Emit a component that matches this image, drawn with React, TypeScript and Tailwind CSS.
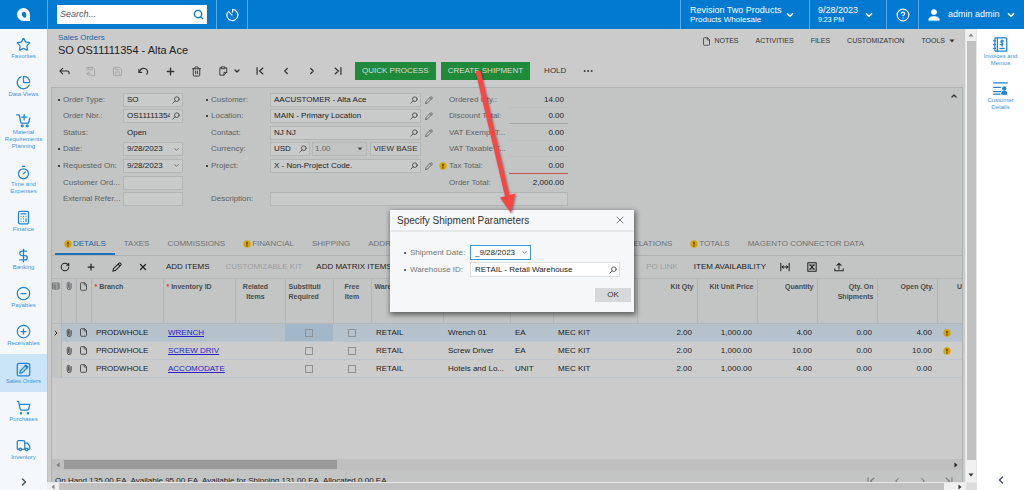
import type { ComponentType, ReactNode } from "react";
import {
  Calculator,
  ChartPie,
  ChevronDown,
  ChevronLeft,
  ChevronRight,
  ChevronUp,
  CircleHelp,
  CircleMinus,
  CirclePlus,
  DollarSign,
  Ellipsis,
  File,
  Paperclip,
  Plus,
  RotateCw,
  Save,
  Search,
  ShoppingCart,
  Star,
  Timer,
  Trash2,
  Truck,
  X,
} from "lucide-react";
import { clsx } from "clsx";

type IconType = ComponentType<{ className?: string; strokeWidth?: number }>;

function svgIcon(children: ReactNode): IconType {
  return function SvgIcon({ className, strokeWidth = 2 }) {
    return (
      <svg
        viewBox="0 0 24 24"
        fill="none"
        stroke="currentColor"
        strokeWidth={strokeWidth}
        strokeLinecap="round"
        strokeLinejoin="round"
        className={className}
        aria-hidden="true"
      >
        {children}
      </svg>
    );
  };
}

const Lookup = svgIcon(
  <>
    <circle cx="14.5" cy="9.5" r="7" />
    <path d="M9.5 14.5 2.5 21.5" />
  </>
);
const Edit = svgIcon(<path d="M2 22l1.500-6L17 2.500c2-1.500 6 2.500 4.500 4.500L8 20.500ZM14.500 5l4.500 4.500" />);
const Back = svgIcon(<path d="M8 5 2 11l6 6M2 11h16c2.500 0 4 1.500 4 5v1" />);
const SaveBack = svgIcon(
  <path d="M4 9V3h14l3 3v15H14M8 3v5h8V3M9 13l-5 4 5 4M4 17h6c2 0 3 1 3 3" />
);
const Undo = svgIcon(<path d="M2 8v6h6M2.500 13.500C5 7 10 4 15 5.500c6 2 8 8 4 12.500" />);
const Copy = svgIcon(<path d="M8 4H4v16h9l6-6V4h-4M8 2h7v4H8ZM13 20v-6h6" />);
const First = svgIcon(<path d="M5 4v16M19 5l-8 7 8 7" />);
const Last = svgIcon(<path d="M19 4v16M5 5l8 7-8 7" />);
const FitColumns = svgIcon(<path d="M2 3v18M22 3v18M5 12h14M8 9l-3 3 3 3M16 9l3 3-3 3" />);
const Excel = svgIcon(
  <>
    <path d="M2 2h20v20H2Z" />
    <path d="m8 7 8 10M16 7 8 17M6 7h4M14 7h4M6 17h4M14 17h4" strokeWidth="2.500" />
  </>
);
const Export = svgIcon(<path d="M12 17V3M7 8l5-5 5 5M2 16v5h20v-5" />);
const RowMenu = svgIcon(<path d="M3 3h18v18H3ZM3 9h18M3 15h18M9 9v12" />);
const CartPlus = svgIcon(
  <>
    <path d="M1 3h4l3 13h12l2-8M13 2v9M8.500 6.500h9" />
    <circle cx="10" cy="20.500" r="1.500" />
    <circle cx="18" cy="20.500" r="1.500" />
  </>
);
const SquareEdit = svgIcon(
  <>
    <rect x="2" y="2" width="20" height="20" rx="3" />
    <path d="m6 18 1-4L16 5l3 3-9 9Z" />
    <path d="m15 6 3 3" strokeWidth="3" />
  </>
);
const Invoice = svgIcon(
  <>
    <rect x="3" y="1.500" width="19" height="21" rx="1" />
    <path d="M7 2v20M1 6h3M1 12h3M1 18h3M11 18h7M17 6.500c-4-2-6 .5-3 2.500s2 4.500-2.500 3M14.500 4.500v10" />
  </>
);
const CustomerCard = svgIcon(
  <>
    <path d="M1 3h22M1 10h11M1 17h11M1 21h10" />
    <circle cx="18" cy="12" r="2.500" fill="currentColor" />
    <path d="M14 21c0-6 8-6 8 0Z" fill="currentColor" />
  </>
);
const User = svgIcon(
  <g fill="currentColor">
    <circle cx="12" cy="7" r="4.500" />
    <path d="M3 21v-2c1-6 17-6 18 0v2Z" />
  </g>
);
const Clock = svgIcon(<path d="M12 12 6 6M13 2.500a9.500 9.500 0 1 1-9 5.500M13 2.500V7" />);

function Warn() {
  return (
    <svg viewBox="0 0 8 8" className="size-2 shrink-0" aria-label="Warning">
      <circle cx="4" cy="4" r="3.700" fill="#d9a300" />
      <path d="M4 1.700v2.800M4 5.300v1.100" stroke="#3a2d00" strokeWidth="1.200" />
    </svg>
  );
}

function Caret({ className }: { className?: string }) {
  return (
    <svg viewBox="0 0 6 4" className={clsx("h-1 w-1.5 shrink-0", className)} aria-hidden="true">
      <path d="M0.500 0.500h5L3 3.500Z" fill="currentColor" />
    </svg>
  );
}

const MODULES: { label: string; icon: IconType; active?: boolean }[] = [
  { label: "Favorites", icon: Star },
  { label: "Data Views", icon: ChartPie },
  { label: "Material Requirements Planning", icon: CartPlus },
  { label: "Time and Expenses", icon: Timer },
  { label: "Finance", icon: Calculator },
  { label: "Banking", icon: DollarSign },
  { label: "Payables", icon: CircleMinus },
  { label: "Receivables", icon: CirclePlus },
  { label: "Sales Orders", icon: SquareEdit, active: true },
  { label: "Purchases", icon: ShoppingCart },
  { label: "Inventory", icon: Truck },
];

const TOTALS = [
  { label: "Ordered Qty.:", value: "14.00", line: "border-b-[#bdbfbf]" },
  { label: "Discount Total:", value: "0.00", line: "border-b-[#a5a7a7]" },
  { label: "VAT Exempt T...", value: "0.00", line: "border-b-[#bdbfbf]" },
  { label: "VAT Taxable T...", value: "0.00", line: "border-b-[#bdbfbf]" },
  { label: "Tax Total:", value: "0.00", line: "border-b-[#c0504d]", warn: true },
  { label: "Order Total:", value: "2,000.00", line: "border-b-transparent" },
];

const LINES = [
  { item: "WRENCH", desc: "Wrench 01", uom: "EA", qty: "4.00", open: "4.00", warn: true, active: true },
  { item: "SCREW DRIV", desc: "Screw Driver", uom: "EA", qty: "10.00", open: "10.00", warn: true },
  { item: "ACCOMODATE", desc: "Hotels and Lo...", uom: "UNIT", qty: "4.00", open: "0.00" },
];

function TopBar() {
  return (
    <header className="flex h-[29px] shrink-0 items-stretch bg-[#007ad0] text-white">
      <a href="#home" aria-label="Home" className="flex w-12 items-center justify-center border-r border-[#5cabe2]">
        <svg viewBox="0 0 13 13" className="size-[13px]" aria-hidden="true">
          <path
            d="M6.500 0A6.500 6.500 0 0 1 13 6.500V13H6.500A6.500 6.500 0 0 1 6.500 0ZM6.500 3.800A2.700 2.700 0 1 0 9.200 9.200V6.500A2.700 2.700 0 0 0 6.500 3.800Z"
            fill="white"
            fillRule="evenodd"
          />
        </svg>
      </a>
      <div className="ml-[9px] flex h-[19px] w-[150px] items-center self-center bg-white px-[3px]">
        <input
          aria-label="Search"
          placeholder="Search..."
          className="min-w-0 flex-1 text-[9px] text-gray-700 italic outline-none placeholder:text-gray-600"
        />
        <button aria-label="Run search" className="text-[#007ad0]">
          <Search className="size-[11px]" strokeWidth={3} />
        </button>
      </div>
      <button aria-label="Recent" className="ml-[9px] flex w-8 items-center justify-center border-x border-[#5cabe2]">
        <Clock className="size-3.5" />
      </button>
      <button className="ml-auto flex w-[129px] items-center justify-between border-l border-[#5cabe2] pr-3.5 pl-[9px] text-left">
        <span className="flex flex-col">
          <span className="text-[9px] leading-[10px]">Revision Two Products</span>
          <span className="text-[8px] leading-[10px]">Products Wholesale</span>
        </span>
        <ChevronDown className="size-2.5" strokeWidth={4} />
      </button>
      <button className="flex w-[77px] items-center justify-between border-l border-[#5cabe2] pr-3 pl-2 text-left">
        <span className="flex flex-col">
          <span className="text-[9px] leading-[10px]">9/28/2023</span>
          <span className="text-[7px] leading-[10px]">9:23 PM</span>
        </span>
        <ChevronDown className="size-2.5" strokeWidth={4} />
      </button>
      <button aria-label="Help" className="flex w-8 items-center justify-center border-l border-[#5cabe2]">
        <CircleHelp className="size-3.5" />
      </button>
      <button className="flex w-[106px] items-center border-l border-[#5cabe2] pr-2 pl-2 text-[9px]">
        <User className="size-3.5" strokeWidth={1} />
        <span className="ml-[7px]">admin admin</span>
        <ChevronDown className="ml-auto size-2.5" strokeWidth={4} />
      </button>
    </header>
  );
}

function Sidebar() {
  return (
    <nav className="flex w-[47px] shrink-0 flex-col bg-[#f5f8fb]">
      {MODULES.map(({ label, icon: Icon, active }) => (
        <a
          key={label}
          href="#module"
          className={clsx(
            "flex flex-col items-center px-1 pt-2 pb-[7px] text-center text-[6px] leading-[7px] text-[#3d94d8]",
            active && "bg-[#cbe5f6]"
          )}
        >
          <Icon className="mb-px size-[15px] text-[#2383d2]" strokeWidth={2} />
          <span>{label}</span>
        </a>
      ))}
      <button aria-label="Expand menu" className="mx-auto mt-2 text-gray-600">
        <ChevronRight className="size-3" strokeWidth={3} />
      </button>
    </nav>
  );
}

function SidePanel() {
  return (
    <aside className="flex w-[47px] shrink-0 flex-col items-center bg-white text-center text-[6px] leading-[7px] text-[#3d94d8]">
      <a href="#invoices" className="mt-2 flex flex-col items-center">
        <Invoice className="mb-px size-[15px] text-[#2383d2]" />
        Invoices and
        <br />
        Memos
      </a>
      <a href="#customer" className="mt-3.5 flex flex-col items-center">
        <CustomerCard className="mb-px size-[15px] text-[#2383d2]" />
        Customer
        <br />
        Details
      </a>
      <button aria-label="Collapse panel" className="mt-auto mb-1 text-gray-600">
        <ChevronLeft className="size-3" strokeWidth={3} />
      </button>
    </aside>
  );
}

const ACTIONS: { label: string; icon: IconType; disabled?: boolean; stroke?: number }[] = [
  { label: "Back", icon: Back, stroke: 2.5 },
  { label: "Save and close", icon: SaveBack, disabled: true },
  { label: "Save", icon: Save, disabled: true },
  { label: "Undo", icon: Undo, stroke: 2.5 },
  { label: "Add", icon: Plus, stroke: 3 },
  { label: "Delete", icon: Trash2 },
];

const PAGING: { label: string; icon: IconType }[] = [
  { label: "First", icon: First },
  { label: "Previous", icon: ChevronLeft },
  { label: "Next", icon: ChevronRight },
  { label: "Last", icon: Last },
];

function TitleBar() {
  return (
    <div className="flex items-start justify-between pt-1 pr-2 pl-2.5">
      <div>
        <a href="#orders" className="block text-[8px] leading-[10px] text-[#1d65a3]">
          Sales Orders
        </a>
        <h1 className="text-[11px] leading-[15px] text-[#222]">SO OS11111354 - Alta Ace</h1>
      </div>
      <div className="flex items-center gap-[17px] pt-0.5 text-[7px] leading-[12px] text-[#333]">
        <button className="flex items-center gap-[3px]">
          <File className="size-[9px]" />
          NOTES
        </button>
        <button>ACTIVITIES</button>
        <button>FILES</button>
        <button>CUSTOMIZATION</button>
        <button className="flex items-center gap-1">
          TOOLS <Caret />
        </button>
      </div>
    </div>
  );
}

function ActionBar() {
  return (
    <div className="mt-1 mb-[7px] flex h-[18px] items-stretch pl-[3px] text-[8px] text-[#333]">
      <div className="flex w-[159px]">
        {ACTIONS.map(({ label, icon: Icon, disabled, stroke }) => (
          <button
            key={label}
            aria-label={label}
            disabled={disabled}
            className={clsx("flex flex-1 items-center justify-center", disabled && "text-[#a3a5a5]")}
          >
            <Icon className="size-[11px]" strokeWidth={stroke ?? 2} />
          </button>
        ))}
      </div>
      <button aria-label="Copy" className="flex w-[37px] items-center gap-1 pl-2">
        <Copy className="size-[11px]" strokeWidth={2} />
        <ChevronDown className="size-2" strokeWidth={4} />
      </button>
      {PAGING.map(({ label, icon: Icon }) => (
        <button key={label} aria-label={label} className="flex w-[26px] items-center justify-center">
          <Icon className="size-2.5" strokeWidth={3} />
        </button>
      ))}
      <button className="ml-1 bg-[#1f8a3a] px-[7px] text-[#dcdcdc]">QUICK PROCESS</button>
      <button className="ml-[5px] bg-[#1f8a3a] px-[7px] text-[#dcdcdc]">CREATE SHIPMENT</button>
      <button className="ml-3.5">HOLD</button>
      <button aria-label="More" className="ml-4">
        <Ellipsis className="size-3" strokeWidth={2} />
      </button>
    </div>
  );
}

interface FieldProps {
  id: string;
  label: string;
  value?: string;
  required?: boolean;
  kind?: "lookup" | "date" | "plain" | "static";
  wide?: boolean;
  edit?: boolean;
  className?: string;
}

function FieldLabel({ id, label, required, wide }: { id: string; label: string; required?: boolean; wide?: boolean }) {
  return (
    <label
      htmlFor={id}
      className={clsx("flex shrink-0 items-center whitespace-nowrap text-[#5e6161]", wide ? "w-16" : "w-[65px]")}
    >
      <span className="flex w-[5px] shrink-0">
        {required && <span className="size-[2px] bg-[#444]" />}
      </span>
      {label}
    </label>
  );
}

function Box({ children, className }: { children: ReactNode; className?: string }) {
  return (
    <div className={clsx("flex h-[14px] items-center border border-[#b4b6b6] bg-[#c9caca] pr-0.5 pl-[3px]", className)}>
      {children}
    </div>
  );
}

function Field({ id, label, value = "", required, kind = "plain", wide, edit, className }: FieldProps) {
  return (
    <div className={clsx("flex items-center", className)}>
      <FieldLabel id={id} label={label} required={required} wide={wide} />
      {kind === "static" ? (
        <output id={id} className="pl-1 text-[#222]">
          {value}
        </output>
      ) : (
        <Box className="min-w-0 flex-1">
          <input id={id} defaultValue={value} className="min-w-0 flex-1 text-[#222] outline-none" />
          {kind === "lookup" && (
            <button aria-label={`Look up ${label}`} className="ml-0.5 text-[#444]">
              <Lookup className="size-2" strokeWidth={2.5} />
            </button>
          )}
          {kind === "date" && (
            <button aria-label={`Open ${label}`} className="text-[#666]">
              <ChevronDown className="size-[7px]" strokeWidth={3} />
            </button>
          )}
        </Box>
      )}
      {wide && kind !== "plain" && (
        <div className="flex w-3 shrink-0 justify-end">
          {edit && (
            <button aria-label={`Edit ${label}`} className="text-[#444]">
              <Edit className="size-2" />
            </button>
          )}
        </div>
      )}
    </div>
  );
}

function OrderForm() {
  return (
    <section className="flex gap-[23px] pt-1 pr-1 pb-[25px] pl-1.5 text-[8px] leading-[12px]">
      <div className="grid w-[125px] grid-cols-1 grid-rows-[16px_16px_17px_16px_17px_17px_16px]">
        <Field id="type" label="Order Type:" value="SO" kind="lookup" required />
        <Field id="nbr" label="Order Nbr.:" value="OS11111354" kind="lookup" />
        <Field id="status" label="Status:" value="Open" kind="static" />
        <Field id="date" label="Date:" value="9/28/2023" kind="date" required />
        <Field id="requested" label="Requested On:" value="9/28/2023" kind="date" required />
        <Field id="custord" label="Customer Ord..." />
        <Field id="extref" label="External Refer..." />
      </div>
      <div className="w-[362px]">
        <div className="flex gap-1.5">
          <div className="grid w-[227px] grid-cols-1 grid-rows-[16px_16px_17px_16px_17px_17px]">
            <Field id="customer" label="Customer:" value="AACUSTOMER - Alta Ace" kind="lookup" required wide edit />
            <Field id="location" label="Location:" value="MAIN - Primary Location" kind="lookup" required wide edit />
            <Field id="contact" label="Contact:" value="NJ NJ" kind="lookup" wide edit />
            <div className="flex items-center pr-3">
              <FieldLabel id="currency" label="Currency:" wide />
              <Box className="w-10">
                <input id="currency" defaultValue="USD" className="min-w-0 flex-1 text-[#222] outline-none" />
                <button aria-label="Look up currency" className="text-[#444]">
                  <Lookup className="size-2" strokeWidth={2.5} />
                </button>
              </Box>
              <div className="relative ml-0.5 flex h-[14px] flex-1 items-center border border-[#b4b6b6]">
                <select aria-label="Currency rate" className="h-full w-full appearance-none pl-0.5 text-[#666] outline-none">
                  <option>1.00</option>
                </select>
                <Caret className="absolute right-[3px] text-[#555]" />
              </div>
              <button className="ml-[3px] h-[14px] w-[51px] border border-[#b4b6b6] bg-[#c7c8c8] leading-[12px] text-[#333]">
                VIEW BASE
              </button>
            </div>
            <Field id="project" label="Project:" value="X - Non-Project Code." kind="lookup" required wide edit />
          </div>
          <dl className="grid flex-1 grid-rows-[16px_16px_17px_16px_17px_17px]">
            {TOTALS.map((t) => (
              <div key={t.label} className="flex items-center">
                <dt className="flex w-[70px] shrink-0 items-center whitespace-nowrap text-[#5e6161]">
                  <span className="flex w-2.5 shrink-0">{t.warn && <Warn />}</span>
                  {t.label}
                </dt>
                <dd className={clsx("h-4 flex-1 border-b pr-1 text-right leading-[16px] text-[#222]", t.line)}>
                  {t.value}
                </dd>
              </div>
            ))}
          </dl>
        </div>
        <Field id="description" label="Description:" wide className="h-4" />
      </div>
      <button aria-label="Collapse form" className="ml-auto self-start text-[#333]">
        <ChevronUp className="size-2" strokeWidth={4} />
      </button>
    </section>
  );
}

const TABS: { label: string; warn?: boolean; active?: boolean; className?: string }[] = [
  { label: "DETAILS", warn: true, active: true },
  { label: "TAXES" },
  { label: "COMMISSIONS" },
  { label: "FINANCIAL", warn: true },
  { label: "SHIPPING" },
  { label: "ADDRESSES" },
  { label: "RELATIONS", className: "ml-auto" },
  { label: "TOTALS", warn: true },
  { label: "MAGENTO CONNECTOR DATA" },
];

function Tabs() {
  return (
    <div className="flex h-6 items-stretch border-b border-[#b0b3b4] pr-[89px] pl-[3px] text-[8px] text-[#6f7272]">
      {TABS.map((t) => (
        <button
          key={t.label}
          className={clsx(
            "flex items-center gap-px border-b-2 px-[9px] pt-0.5 whitespace-nowrap",
            t.active ? "border-[#1d73b4] text-[#1d65a3]" : "border-transparent",
            t.className
          )}
        >
          {t.warn && <Warn />}
          {t.label}
        </button>
      ))}
    </div>
  );
}

const GRID_ICONS: { label: string; icon: IconType; stroke: number }[] = [
  { label: "Refresh", icon: RotateCw, stroke: 2.5 },
  { label: "Add row", icon: Plus, stroke: 3 },
  { label: "Edit row", icon: Edit, stroke: 2.5 },
  { label: "Delete row", icon: X, stroke: 3 },
];

const GRID_TOOLS: { label: string; icon: IconType }[] = [
  { label: "Fit columns", icon: FitColumns },
  { label: "Export to Excel", icon: Excel },
  { label: "Upload", icon: Export },
];

function GridToolbar() {
  return (
    <div className="flex h-[22px] items-center pr-[110px] text-[8px] whitespace-nowrap text-[#222]">
      {GRID_ICONS.map(({ label, icon: Icon, stroke }) => (
        <button key={label} aria-label={label} className="flex w-[26px] shrink-0 justify-center">
          <Icon className="size-2.5" strokeWidth={stroke} />
        </button>
      ))}
      <button className="ml-2.5">ADD ITEMS</button>
      <button disabled className="ml-4 text-[#9b9d9d]">
        CUSTOMIZABLE KIT
      </button>
      <button className="ml-3.5">ADD MATRIX ITEMS</button>
      <button disabled className="ml-auto text-[#9b9d9d]">
        PO LINK
      </button>
      <button className="mr-[5px] ml-4">ITEM AVAILABILITY</button>
      {GRID_TOOLS.map(({ label, icon: Icon }) => (
        <button key={label} aria-label={label} className="flex w-[27px] shrink-0 justify-center">
          <Icon className="size-2.5" strokeWidth={2.5} />
        </button>
      ))}
    </div>
  );
}

function LinesTable() {
  const th = "border-r border-[#b3b7ba] px-[3px] pt-[3px] align-top font-bold";
  const num = "pr-[5px] text-right";
  return (
    <table className="w-full table-fixed border-collapse text-[8px] text-[#222]">
      <colgroup>
        <col className="w-[9px]" />
        <col className="w-[15px]" />
        <col className="w-[15px]" />
        <col className="w-[72px]" />
        <col className="w-[72px]" />
        <col className="w-[50px]" />
        <col className="w-12" />
        <col className="w-[38px]" />
        <col className="w-[72px]" />
        <col className="w-[67px]" />
        <col className="w-[43px]" />
        <col className="w-[84px]" />
        <col className="w-[60px]" />
        <col className="w-[60px]" />
        <col className="w-[60px]" />
        <col className="w-[60px]" />
        <col className="w-[60px]" />
        <col />
      </colgroup>
      <thead>
        <tr className="h-[45px] border-y border-[#b3b7ba] text-left text-[7px] leading-[10px] text-[#4a4c4c]">
          <th className="border-r border-[#b3b7ba] pt-[3px] align-top">
            <RowMenu className="mx-auto size-2" />
          </th>
          <th className="border-r border-[#b3b7ba] pt-[3px] align-top">
            <Paperclip className="mx-auto size-2 -rotate-45" />
          </th>
          <th className="border-r border-[#b3b7ba] pt-[3px] align-top">
            <File className="mx-auto size-[9px]" strokeWidth={2.5} />
          </th>
          <th className={th}>
            <span className="text-[#d33]">*</span> Branch
          </th>
          <th className={th}>
            <span className="text-[#d33]">*</span> Inventory ID
          </th>
          <th className={clsx(th, "pr-3 text-center")}>Related Items</th>
          <th className={th}>Substituti Required</th>
          <th className={clsx(th, "text-center")}>Free Item</th>
          <th className={th}>Warehouse</th>
          <th className={th}></th>
          <th className={th}></th>
          <th className={th}></th>
          <th className={clsx(th, "text-right")}>Kit Qty</th>
          <th className={clsx(th, "text-right whitespace-nowrap")}>Kit Unit Price</th>
          <th className={clsx(th, "text-right")}>Quantity</th>
          <th className={clsx(th, "text-right")}>Qty. On Shipments</th>
          <th className={clsx(th, "text-right")}>Open Qty.</th>
          <th className="overflow-hidden pt-[3px] text-right align-top font-bold">U</th>
        </tr>
      </thead>
      <tbody>
        {LINES.map((l) => (
          <tr
            key={l.item}
            className={clsx("h-[18px] border-b border-[#bfc5ca]", l.active ? "bg-[#b5c1cb]" : "bg-[#cccccc]")}
          >
            <td className="border-r border-[#b3b7ba] bg-[#c3c5c5]">
              {l.active && <ChevronRight className="size-2" strokeWidth={3} />}
            </td>
            <td className="text-[#444]">
              <Paperclip className="mx-auto size-2 -rotate-45" strokeWidth={2.5} />
            </td>
            <td className="text-[#444]">
              <File className="mx-auto size-[9px]" strokeWidth={2.5} />
            </td>
            <td className="pl-[5px]">PRODWHOLE</td>
            <td className="pl-[5px] whitespace-nowrap">
              <a href="#item" className="text-[#2a22c8] underline">
                {l.item}
              </a>
            </td>
            <td></td>
            <td className={clsx(l.active && "bg-[#a2b7c7]")}>
              <input
                type="checkbox"
                aria-label={`Substitution required for ${l.item}`}
                className="mx-auto block size-2 appearance-none border border-[#8f9294]"
              />
            </td>
            <td>
              <input
                type="checkbox"
                aria-label={`Free item ${l.item}`}
                className="mx-auto block size-2 appearance-none border border-[#8f9294]"
              />
            </td>
            <td className="pl-[5px]">RETAIL</td>
            <td className="pl-[5px] whitespace-nowrap">{l.desc}</td>
            <td className="pl-[5px]">{l.uom}</td>
            <td className="pl-[5px]">MEC KIT</td>
            <td className={num}>2.00</td>
            <td className={num}>1,000.00</td>
            <td className={num}>{l.qty}</td>
            <td className={num}>0.00</td>
            <td className={num}>{l.open}</td>
            <td className="pl-1.5">{l.warn && <Warn />}</td>
          </tr>
        ))}
      </tbody>
    </table>
  );
}

function GridFooter() {
  return (
    <>
      <div className="flex h-[11px] shrink-0 items-center bg-[#bfbfbf]">
        <Caret className="mx-[3px] rotate-90 text-[#777]" />
        <div className="h-[9px] w-[30%] bg-[#999]" />
        <Caret className="mr-[3px] ml-auto -rotate-90 text-[#222]" />
      </div>
      <div className="flex h-3 shrink-0 items-start justify-between overflow-hidden bg-[#c3c5c5] pt-1.5 pl-[3px] text-[8px] leading-[10px] text-[#222]">
        <span>On Hand 135.00 EA, Available 95.00 EA, Available for Shipping 131.00 EA, Allocated 0.00 EA</span>
        <span className="flex gap-4 pr-2 text-[#777]">
          {PAGING.map(({ label, icon: Icon }) => (
            <Icon key={label} className="size-2.5" strokeWidth={2.5} />
          ))}
        </span>
      </div>
    </>
  );
}

function ShipmentDialog() {
  return (
    <div className="pointer-events-none absolute inset-0 flex items-start justify-center pt-[210px]">
      <div className="relative">
        <form
          role="dialog"
          aria-label="Specify Shipment Parameters"
          className="pointer-events-auto w-[244px] bg-[#f5f7f9] text-[8px] text-[#222] shadow-[1px_2px_5px_1px_rgba(0,0,0,0.5)]"
        >
          <div className="flex h-[22px] items-center justify-between border-b-2 border-[#e6e8ea] pr-2 pl-[7px]">
            <h2 className="text-[10px] text-[#333]">Specify Shipment Parameters</h2>
            <button type="button" aria-label="Close" className="text-[#777]">
              <X className="size-3" strokeWidth={2} />
            </button>
          </div>
          <div className="flex items-center pt-[13px] pl-3.5">
            <label htmlFor="shipdate" className="flex w-[66px] items-center text-[#777]">
              <span className="mr-1 size-[2px] bg-[#666]" />
              Shipment Date:
            </label>
            <div className="flex h-[15px] w-[61px] items-center border border-[#3b9be0] bg-white pr-0.5 pl-1">
              <input id="shipdate" defaultValue="_9/28/2023" className="min-w-0 flex-1 outline-none" />
              <ChevronDown className="size-[7px] text-[#777]" strokeWidth={3} />
            </div>
          </div>
          <div className="flex items-center pt-[2px] pr-[14px] pl-3.5">
            <label htmlFor="warehouse" className="flex w-[66px] items-center text-[#777]">
              <span className="mr-1 size-[2px] bg-[#666]" />
              Warehouse ID:
            </label>
            <div className="flex h-[15px] flex-1 items-center border border-[#dcdfe1] bg-white pr-0.5 pl-1">
              <input id="warehouse" defaultValue="RETAIL - Retail Warehouse" className="min-w-0 flex-1 outline-none" />
              <Lookup className="size-2 text-[#444]" strokeWidth={2.5} />
            </div>
          </div>
          <div className="flex justify-end pt-[11px] pr-[3px] pb-2.5">
            <button type="button" className="h-[14px] w-9 bg-[#d6d8da] text-[#333]">
              OK
            </button>
          </div>
        </form>
        <svg
          viewBox="0 0 56 148"
          className="absolute -top-[142px] left-[81px] h-[148px] w-14 drop-shadow-[1px_1px_1px_rgba(0,0,0,0.4)]"
          aria-hidden="true"
        >
          <path d="M5 5.500a2.500 2.500 0 0 1 5-1L38.300 127l6-1.500L40 145 29 129.500l5-1.200Z" fill="#fb4444" />
        </svg>
      </div>
    </div>
  );
}

export default function App() {
  return (
    <div className="relative flex h-screen flex-col overflow-hidden bg-white font-['Liberation_Sans',Arial,sans-serif]">
      <TopBar />
      <div className="flex min-h-0 flex-1">
        <Sidebar />
        <div className="flex min-w-0 flex-1 flex-col">
          <div className="flex min-h-0 flex-1">
            <main className="flex min-w-0 flex-1 flex-col border-l border-[#c0c0c0] bg-[#cbcbcb] pr-[2px]">
              <TitleBar />
              <ActionBar />
              <div className="ml-[3px] flex min-h-0 flex-1 flex-col border-x border-t border-[#aeb1b2]">
                <div className="bg-[#c3c5c5]">
                  <OrderForm />
                  <Tabs />
                  <GridToolbar />
                  <LinesTable />
                </div>
                <div className="flex-1" />
                <GridFooter />
              </div>
            </main>
            <div className="flex w-3 shrink-0 flex-col items-center border-x border-[#e8e8e8] bg-[#f0f0f0]">
              <Caret className="my-1 rotate-180 text-[#888]" />
              <div className="w-[9px] flex-1 bg-[#c1c1c1]" />
              <Caret className="mt-[13px] mb-[5px] text-[#333]" />
            </div>
          </div>
          <div className="flex h-2 shrink-0 items-center border-t border-[#e8e8e8] bg-[#f0f0f0]">
            <Caret className="mx-[3px] rotate-90 text-[#888]" />
            <div className="h-full flex-1 bg-[#c1c1c1]" />
            <Caret className="mr-[3px] ml-[13px] -rotate-90 text-[#333]" />
            <div className="h-full w-[11px] bg-[#dcdcdc]" />
          </div>
        </div>
        <SidePanel />
      </div>
      <ShipmentDialog />
    </div>
  );
}
